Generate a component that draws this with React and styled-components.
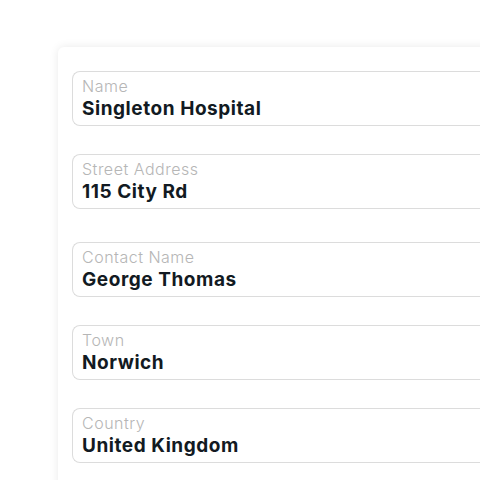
import React from "react";
import styled, { createGlobalStyle } from "styled-components";

const Global = createGlobalStyle`
  html, body { margin: 0; padding: 0; background: #ffffff; }
  body { font-family: "Inter", "Noto Sans", sans-serif; overflow: hidden; }
`;

const Page = styled.div`
  width: 480px;
  height: 480px;
  padding: 47px 0 0 58px;
  box-sizing: border-box;
  overflow: hidden;
`;

const Card = styled.div`
  width: 460px;
  height: 480px;
  background: #ffffff;
  border-radius: 6px;
  box-shadow: 0 0 10px rgba(0, 0, 0, 0.09);
  padding: 24px 0 0 14px;
  box-sizing: border-box;
  display: flex;
  flex-direction: column;
`;

const Field = styled.div`
  height: 55px;
  box-sizing: border-box;
  border: 1px solid #dcdcdc;
  border-radius: 8px;
  border-right: none;
  border-top-right-radius: 0;
  border-bottom-right-radius: 0;
  padding: 5px 0 0 9px;
  margin-top: ${(p) => p.$gap}px;
  display: flex;
  flex-direction: column;
`;

const Label = styled.div`
  font-size: 16px;
  line-height: 19px;
  letter-spacing: 0.5px;
  color: #b6b6b6;
  font-weight: 300;
`;

const Value = styled.div`
  font-size: 19px;
  line-height: 25px;
  letter-spacing: 0.55px;
  color: #121a22;
  font-weight: 700;
`;

const fields = [
  { label: "Name", value: "Singleton Hospital", gap: 0 },
  { label: "Street Address", value: "115 City Rd", gap: 28 },
  { label: "Contact Name", value: "George Thomas", gap: 33 },
  { label: "Town", value: "Norwich", gap: 28 },
  { label: "Country", value: "United Kingdom", gap: 28 },
];

export default function App() {
  return (
    <>
      <Global />
      <Page>
        <Card>
          {fields.map((f) => (
            <Field key={f.label} $gap={f.gap}>
              <Label>{f.label}</Label>
              <Value>{f.value}</Value>
            </Field>
          ))}
        </Card>
      </Page>
    </>
  );
}
